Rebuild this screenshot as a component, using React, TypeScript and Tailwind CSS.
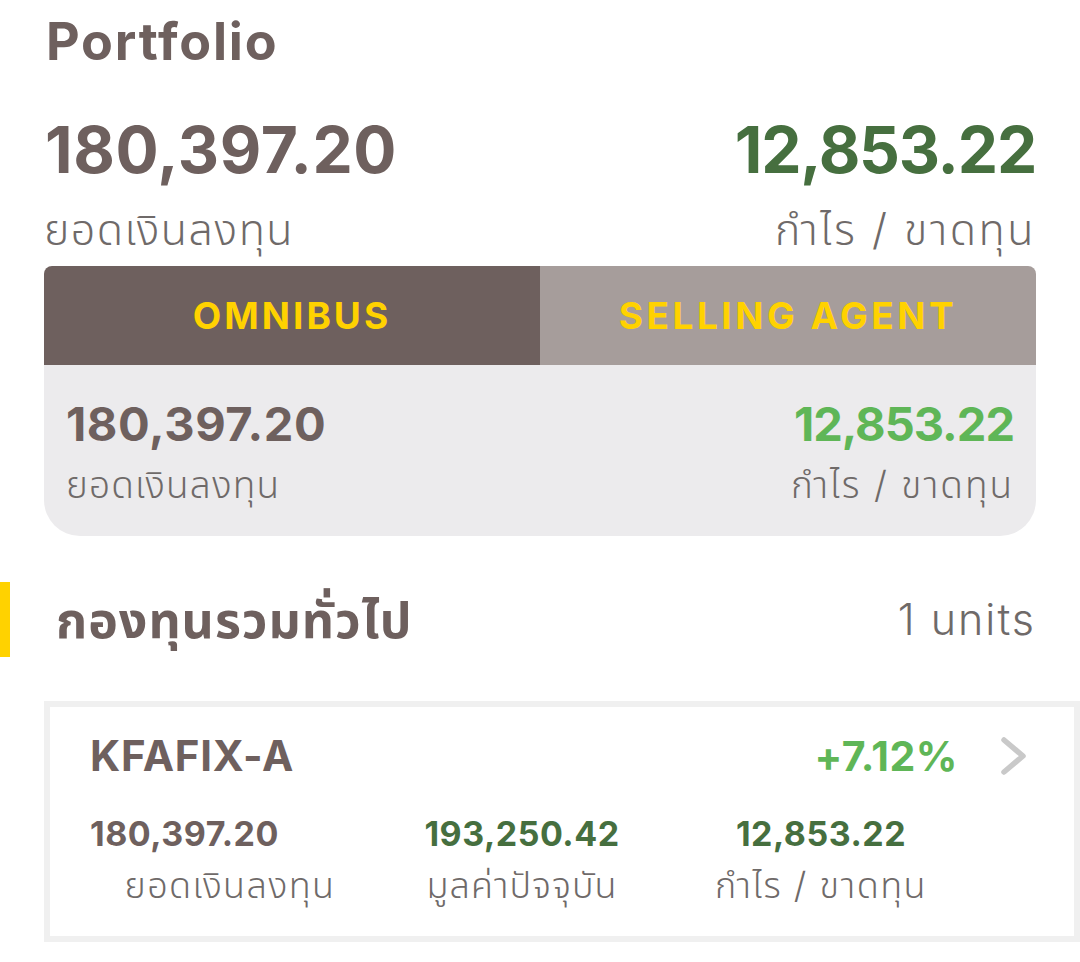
const sans = "font-['Inter','Noto_Sans_Thai','Noto_Sans',sans-serif]"

function Stat({ value, label, align, valueClass, labelClass }: {
  value: string
  label: string
  align: 'left' | 'right'
  valueClass: string
  labelClass: string
}) {
  return (
    <div className={`flex flex-col ${align === 'right' ? 'items-end' : 'items-start'}`}>
      <div className={`font-bold leading-none ${valueClass}`}>{value}</div>
      <div className={`font-light text-[#6f6a69] ${labelClass}`}>{label}</div>
    </div>
  )
}

function Chevron() {
  return (
    <svg width="27" height="40" viewBox="0 0 27 40" className="ml-[42px]">
      <polyline
        points="4,4 23,20 4,36"
        fill="none"
        stroke="#c9c9c9"
        strokeWidth="5.5"
        strokeLinecap="round"
        strokeLinejoin="round"
      />
    </svg>
  )
}

export default function App() {
  return (
    <div className={`w-[1080px] min-h-[962px] bg-white ${sans} text-[#6e605e] overflow-hidden`}>
      {/* Summary */}
      <div className="px-[44px] pt-[16px]">
        <h1 className="text-[52px] font-bold leading-none tracking-[1.8px] pl-[2px]">Portfolio</h1>

        <div className="flex justify-between mt-[50px]">
          <Stat
            value="180,397.20"
            label="ยอดเงินลงทุน"
            align="left"
            valueClass="text-[64px] tracking-[0.6px] pl-[1px]"
            labelClass="text-[43px] tracking-[1.5px] leading-[50px] mt-[22px]"
          />
          <Stat
            value="12,853.22"
            label="กำไร / ขาดทุน"
            align="right"
            valueClass="text-[64px] tracking-[-1.2px] text-[#466f3f]"
            labelClass="text-[43px] tracking-[2.5px] leading-[50px] mt-[22px] whitespace-pre"
          />
        </div>

        {/* Tabs */}
        <div className="mt-[12px] rounded-t-[8px] overflow-hidden flex h-[99px]">
          <div className="w-1/2 bg-[#6e605e] flex items-center justify-center">
            <span className="text-[37px] font-bold tracking-[3px] text-[#ffd200]">OMNIBUS</span>
          </div>
          <div className="w-1/2 bg-[#a69d9b] flex items-center justify-center">
            <span className="text-[37px] font-bold tracking-[3.5px] text-[#ffd200]">SELLING AGENT</span>
          </div>
        </div>
        <div className="h-[171px] bg-[#ecebed] rounded-b-[36px] px-[22px] pt-[35px] flex justify-between">
          <Stat
            value="180,397.20"
            label="ยอดเงินลงทุน"
            align="left"
            valueClass="text-[47px] tracking-[0.6px]"
            labelClass="text-[37px] tracking-[1.2px] leading-[44px] mt-[16px]"
          />
          <Stat
            value="12,853.22"
            label="กำไร / ขาดทุน"
            align="right"
            valueClass="text-[47px] tracking-[-1px] text-[#5fb657]"
            labelClass="text-[37px] tracking-[2px] leading-[44px] mt-[16px] whitespace-pre"
          />
        </div>
      </div>

      {/* Section header */}
      <div className="flex items-center mt-[46px] h-[75px] pr-[44px]">
        <div className="w-[10px] h-full bg-[#ffd200]" />
        <div className="ml-[46px] text-[50px] font-bold leading-none tracking-[1px]">กองทุนรวมทั่วไป</div>
        <div className="ml-auto text-[43px] font-light text-[#6f6a69] tracking-[2px] leading-none">1 units</div>
      </div>

      {/* Fund card */}
      <div className="ml-[44px] mt-[44px] border-[6px] border-[#f0f0f0] h-[241px] pl-[40px] pr-[47px] pt-[28px]">
        <div className="flex items-center justify-between">
          <div className="text-[42px] font-bold leading-none tracking-[0.8px]">KFAFIX-A</div>
          <div className="flex items-center">
            <div className="text-[41px] font-bold leading-none tracking-[0.5px] text-[#5fb657]">+7.12%</div>
            <Chevron />
          </div>
        </div>
        <div className="flex mt-[40px]">
          <div className="w-[272px] flex flex-col">
            <div className="text-[34px] font-bold leading-none tracking-[0.5px]">180,397.20</div>
            <div className="self-center pl-[8px] text-[36px] tracking-[1.4px] font-light text-[#6f6a69] leading-[44px] mt-[12px]">ยอดเงินลงทุน</div>
          </div>
          <div className="w-[320px] flex flex-col items-center">
            <div className="text-[34px] font-bold leading-none tracking-[0.5px] text-[#466f3f]">193,250.42</div>
            <div className="text-[36px] tracking-[1px] font-light text-[#6f6a69] leading-[44px] mt-[12px]">มูลค่าปัจจุบัน</div>
          </div>
          <div className="w-[278px] flex flex-col items-center">
            <div className="text-[34px] font-bold leading-none tracking-[0.5px] text-[#466f3f]">12,853.22</div>
            <div className="text-[36px] tracking-[1.5px] font-light text-[#6f6a69] leading-[44px] mt-[12px] whitespace-pre">กำไร / ขาดทุน</div>
          </div>
        </div>
      </div>
    </div>
  )
}
